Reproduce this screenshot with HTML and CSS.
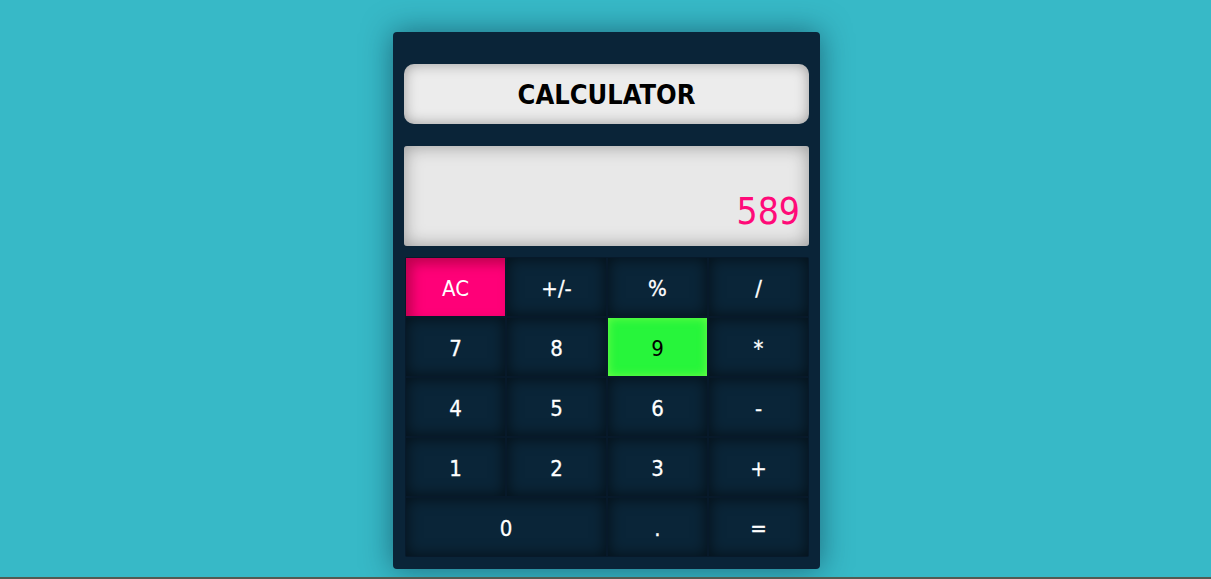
FILE: index.html
```html
<!DOCTYPE html>
<html>
<head>
<meta charset="utf-8">
<link rel="stylesheet" href="styles.css">
</head>
<body>
<div class="calc">
  <div class="title">CALCULATOR</div>
  <div class="display">589</div>
  <div class="keys">
    <div class="key ac">AC</div>
    <div class="key">+/-</div>
    <div class="key">%</div>
    <div class="key">/</div>
    <div class="key">7</div>
    <div class="key">8</div>
    <div class="key active">9</div>
    <div class="key">*</div>
    <div class="key">4</div>
    <div class="key">5</div>
    <div class="key">6</div>
    <div class="key">-</div>
    <div class="key">1</div>
    <div class="key">2</div>
    <div class="key">3</div>
    <div class="key">+</div>
    <div class="key zero">0</div>
    <div class="key">.</div>
    <div class="key">=</div>
  </div>
</div>
</body>
</html>
```
FILE: styles.css
```css
html {
  background: #525b52;
  margin: 0;
}
body {
  margin: 0;
  height: 577px;
  background: #37b9c7;
  font-family: "DejaVu Sans Condensed", "DejaVu Sans", sans-serif;
  display: flex;
  justify-content: center;
  align-items: flex-start;
  padding: 32px 0 0 2px;
  box-sizing: border-box;
}
.calc {
  width: 427px;
  height: 537px;
  box-sizing: border-box;
  background: #0a2438;
  border-radius: 4px;
  padding: 32px 11px 12px 11px;
  box-shadow: 0 0 30px rgba(10, 40, 60, 0.55);
  display: flex;
  flex-direction: column;
}
.title {
  flex: 0 0 60px;
  background: #ececec;
  border-radius: 10px;
  box-shadow: inset 0 0 14px rgba(0, 0, 0, 0.35);
  display: flex;
  align-items: center;
  justify-content: center;
  font-weight: bold;
  font-size: 27px;
  color: #000;
}
.display {
  flex: 0 0 100px;
  margin-top: 22px;
  background: #e8e8e8;
  border-radius: 3px;
  box-shadow: inset 0 0 18px rgba(0, 0, 0, 0.35);
  display: flex;
  align-items: flex-end;
  justify-content: flex-end;
  padding: 0 9px 12px 0;
  box-sizing: border-box;
  font-size: 37px;
  line-height: 1.2;
  color: #ff0a78;
}
.keys {
  flex: 0 0 300px;
  box-sizing: border-box;
  margin-top: 11px;
  display: grid;
  grid-template-columns: repeat(4, 99px);
  grid-template-rows: repeat(5, 1fr);
  gap: 2px;
  padding: 1px;
  margin-left: 1px;
  width: 404px;
  background: #07192a;
  border-radius: 2px;
}
.key {
  background: #0a2538;
  box-shadow: inset 0 0 15px rgba(0, 0, 0, 0.6);
  color: #fff;
  font-size: 22px;
  -webkit-text-stroke: 0.3px currentColor;
  display: flex;
  align-items: center;
  justify-content: center;
  padding-top: 2px;
  box-sizing: border-box;
}
.key.ac {
  background: #ff0078;
  -webkit-text-stroke: 0;
  box-shadow: inset 6px 6px 12px rgba(130, 0, 40, 0.5);
}
.key.active {
  background: #27f53b;
  color: #000;
  -webkit-text-stroke: 0;
  box-shadow: inset 0 0 10px rgba(120, 255, 70, 0.9);
}
.key.zero {
  grid-column: span 2;
}
```
